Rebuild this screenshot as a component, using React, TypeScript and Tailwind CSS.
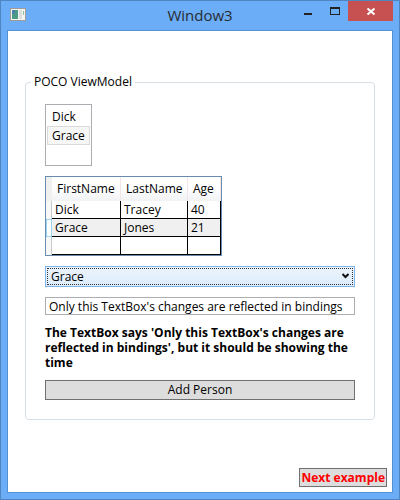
import { useState } from 'react';

interface Person {
  firstName: string;
  lastName: string;
  age: number | null;
}

const INITIAL_PEOPLE: Person[] = [
  { firstName: 'Dick', lastName: 'Tracey', age: 40 },
  { firstName: 'Grace', lastName: 'Jones', age: 21 },
];

function TitleBar() {
  return (
    <header className="grid grid-cols-[1fr_auto_1fr] items-start h-[29px]">
      <svg className="ml-[3px] mt-[7px] w-4 h-[14px]" viewBox="0 0 16 14">
        <rect x="0.5" y="0.5" width="15" height="12" fill="#f4f4f2" stroke="#a39c96" />
        <rect x="2" y="2" width="6" height="9" fill="#4d9a86" />
        <rect x="2" y="2" width="3" height="4" fill="#4b83a6" />
        <rect x="9" y="2" width="3" height="9" fill="#dedede" />
        <rect x="13" y="3" width="1" height="4" fill="#8fc3a0" />
      </svg>
      <h1 className="pt-1 text-[15px] leading-5 text-[#262c33]">Window3</h1>
      <div className="flex justify-end">
        <button aria-label="Minimize" className="w-[26px] h-5">
          <svg className="w-[26px] h-5" viewBox="0 0 26 20">
            <rect x="8" y="12" width="8" height="2" fill="#222" />
          </svg>
        </button>
        <button aria-label="Maximize" className="w-[26px] h-5">
          <svg className="w-[26px] h-5" viewBox="0 0 26 20" shapeRendering="crispEdges">
            <path d="M8 6h10v8H8zM9 8v5h8V8z" fill="#222" fillRule="evenodd" />
          </svg>
        </button>
        <button aria-label="Close" className="w-[45px] h-5 bg-[#c75050]">
          <svg className="w-[45px] h-5" viewBox="0 0 45 20">
            <path d="M19.5 7.5l7 6M26.5 7.5l-7 6" stroke="#fff" strokeWidth="2" />
          </svg>
        </button>
      </div>
    </header>
  );
}

function PeopleTable({ people, selected }: { people: Person[]; selected: string }) {
  // trailing blank row is the "new item" placeholder
  const rows = [...people, { firstName: '', lastName: '', age: null }];
  const head = 'h-6 px-[5px] font-normal text-left border-r border-[#f0e6e6]';
  const cell = 'px-[3px] py-0 border-r border-b border-black';

  return (
    <table className="self-start table-fixed w-[177px] border border-separate border-spacing-0 border-[#688caf]">
      <colgroup>
        <col className="w-[6px]" />
        <col className="w-[69px]" />
        <col className="w-[67px]" />
        <col className="w-[33px]" />
      </colgroup>
      <thead>
        <tr className="bg-linear-to-b from-white from-40% to-[#f1f2f4]">
          <th className="p-0 bg-[#f0f0f0]"></th>
          <th className={head}>FirstName</th>
          <th className={head}>LastName</th>
          <th className={head}>Age</th>
        </tr>
      </thead>
      <tbody>
        {rows.map((p, i) => {
          const active = p.firstName === selected;
          return (
            <tr key={i} className={active ? 'h-[18px] bg-[#f0f0f0]' : 'h-[18px] bg-white'}>
              <td className={active ? 'p-0 bg-white border border-[#98d5f5]' : 'p-0 bg-[#f8f8f8] border-r border-[#c9caca]'}></td>
              <td className={cell}>{p.firstName}</td>
              <td className={cell}>{p.lastName}</td>
              <td className={cell}>{p.age}</td>
            </tr>
          );
        })}
      </tbody>
    </table>
  );
}

export default function App() {
  const [people, setPeople] = useState(INITIAL_PEOPLE);
  const [selected, setSelected] = useState('Grace');
  const [text, setText] = useState("Only this TextBox's changes are reflected in bindings");

  const addPerson = () => {
    setPeople([...people, { firstName: 'New', lastName: 'Person', age: 30 }]);
  };

  return (
    <div className="min-h-screen flex flex-col px-[6px] pb-[6px] bg-[#6badf6] border border-[#4f86c2] font-['Open_Sans','Noto_Sans',sans-serif] text-xs leading-4 text-black">
      <TitleBar />
      <main className="flex-1 flex flex-col bg-white border border-[#5591d2]">
        <fieldset className="mt-[43px] mx-[17px] px-[5px] border border-[#d5dfe5] rounded-[4px]">
          <legend className="px-[3px]">POCO ViewModel</legend>
          <div className="flex flex-col gap-[10px] pt-[14px] px-[14px] pb-[19px]">
            <select
              size={3}
              aria-label="People"
              value={selected}
              onChange={(e) => setSelected(e.target.value)}
              className="self-start w-[47px] h-[62px] p-px pt-[2px] overflow-hidden border border-[#abadb3] bg-white outline-none"
            >
              {people.map((p, i) => (
                <option
                  key={i}
                  value={p.firstName}
                  className="h-[19px] min-h-0 px-1 py-0 border border-transparent text-black checked:border-[#dadada] checked:bg-[linear-gradient(#f6f6f6,#f6f6f6)]"
                >
                  {p.firstName}
                </option>
              ))}
            </select>

            <PeopleTable people={people} selected={selected} />

            <div className="relative flex">
              <select
                aria-label="Selected person"
                value={selected}
                onChange={(e) => setSelected(e.target.value)}
                className="w-full h-[21px] px-[5px] appearance-none border border-[#7eb4ea] bg-linear-to-b from-[#ecf4fc] to-[#dcecfc] outline-1 outline-dotted outline-[#333] -outline-offset-3"
              >
                {people.map((p, i) => (
                  <option key={i}>{p.firstName}</option>
                ))}
              </select>
              <svg className="absolute right-[6px] top-[7px] w-[7px] h-[6px] pointer-events-none" viewBox="0 0 7 6">
                <path d="M0.5 1l3 3 3-3" fill="none" stroke="#111" strokeWidth="2" />
              </svg>
            </div>

            <input
              type="text"
              aria-label="Bound text"
              value={text}
              onChange={(e) => setText(e.target.value)}
              className="w-full h-[18px] px-[3px] border border-[#abadb3] outline-none"
            />

            <p className="font-bold leading-[15px]">
              {`The TextBox says '${text}', but it should be showing the time`}
            </p>

            <button onClick={addPerson} className="h-5 bg-[#dddddd] border border-[#707070]">
              Add Person
            </button>
          </div>
        </fieldset>

        <button className="self-end mt-auto mr-[5px] mb-[5px] h-[19px] px-px bg-[#dddddd] border border-[#707070] font-bold text-[#ff0000]">
          Next example
        </button>
      </main>
    </div>
  );
}
